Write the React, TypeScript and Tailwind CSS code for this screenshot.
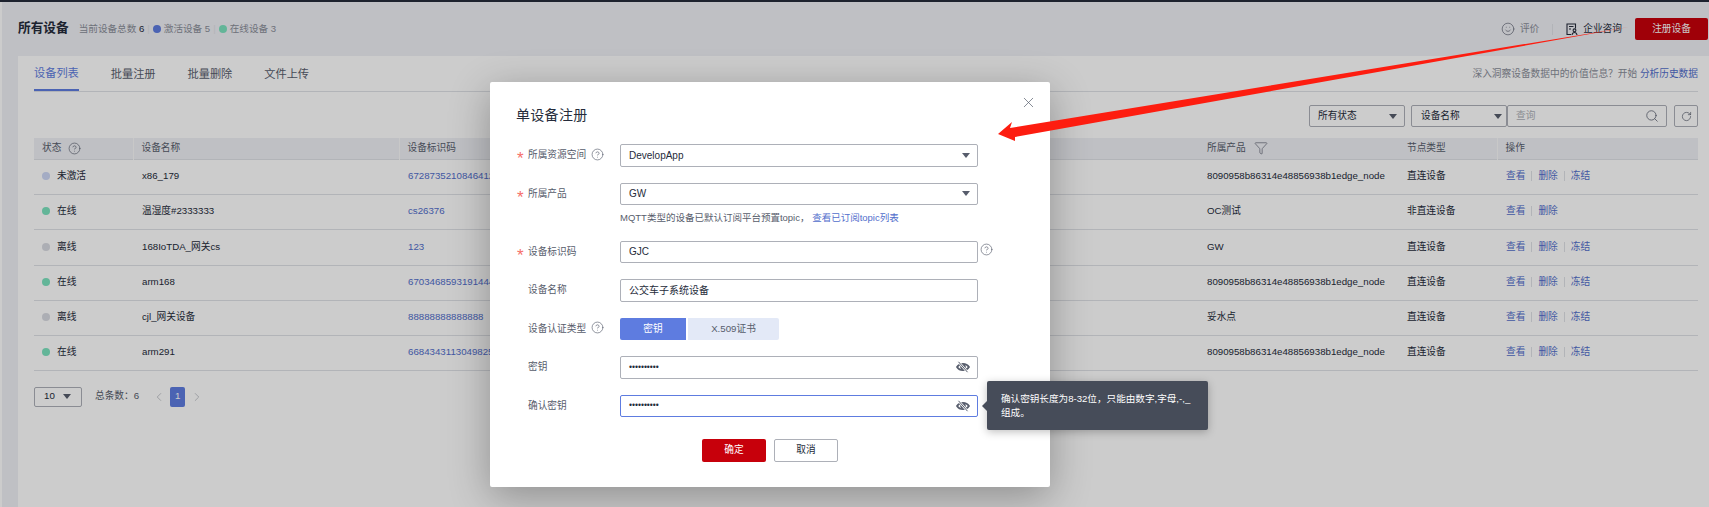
import React from 'react';
import { ChevronLeft, ChevronRight, CircleHelp, Funnel, RotateCw, Search, Smile, X } from 'lucide-react';

const rows = [
  { status: '未激活', dot: 'bg-[#cdd7f5]', name: 'x86_179', id: '672873521084641234567890', product: '8090958b86314e48856938b1edge_node', node: '直连设备', freeze: true, h: 'h-[35px]' },
  { status: '在线', dot: 'bg-[#7ce3bf]', name: '温湿度#2333333', id: 'cs26376', product: 'OC测试', node: '非直连设备', freeze: false, h: 'h-[35px]' },
  { status: '离线', dot: 'bg-[#d8dae2]', name: '168IoTDA_网关cs', id: '123', product: 'GW', node: '直连设备', freeze: true, h: 'h-[36px]' },
  { status: '在线', dot: 'bg-[#7ce3bf]', name: 'arm168', id: '670346859319144412345678', product: '8090958b86314e48856938b1edge_node', node: '直连设备', freeze: true, h: 'h-[35px]' },
  { status: '离线', dot: 'bg-[#d8dae2]', name: 'cjl_网关设备', id: '88888888888888', product: '妥水点', node: '直连设备', freeze: true, h: 'h-[35px]' },
  { status: '在线', dot: 'bg-[#7ce3bf]', name: 'arm291', id: '668434311304982512345678', product: '8090958b86314e48856938b1edge_node', node: '直连设备', freeze: true, h: 'h-[35px]' },
];

const Caret = ({ className = '' }: { className?: string }) => (
  <svg width="8" height="5" viewBox="0 0 8 5" className={className}>
    <path d="M0 0h8L4 5z" fill="#575d6c" />
  </svg>
);

const EyeSlash = () => (
  <svg width="14" height="12" viewBox="0 0 14 12" fill="none">
    <path d="M1 6C3.600 1.800 10.400 1.800 13 6C10.400 10.200 3.600 10.200 1 6Z" stroke="#575d6c" strokeWidth="1.700" />
    <circle cx="7" cy="6" r="2.800" fill="#575d6c" />
    <path d="M2.500 .8L11.500 11.200" stroke="#ffffff" strokeWidth="2.200" />
    <path d="M2.500 .8L11.500 11.200" stroke="#575d6c" strokeWidth="1" />
  </svg>
);

const ConsultIcon = () => (
  <svg width="12" height="13" viewBox="0 0 12 13" fill="none" stroke="#252b3a" strokeWidth="1.100">
    <path d="M5 11.500H1V1h8.500v4.500" />
    <path d="M3 3.500h4.500M3 6h2" />
    <circle cx="8.500" cy="7.300" r="1.400" />
    <path d="M6 12c.3-1.700 1.200-2.500 2.500-2.500S10.700 10.300 11 12" />
  </svg>
);

const Field = ({ className = '', focus = false, children }: { className?: string; focus?: boolean; children: React.ReactNode }) => (
  <div className={`flex w-[358px] items-center justify-between rounded-[2px] border bg-white pb-px pl-[8px] pr-[7px] text-[10px] text-[#252b3a] ${focus ? 'border-[#5e7ce0]' : 'border-[#adb0b8]'} ${className}`}>
    {children}
  </div>
);

const Label = ({ text, star = false, help = false }: { text: string; star?: boolean; help?: boolean }) => (
  <div className="flex w-[104px] shrink-0 items-center text-[9.700px] text-[#575d6c]">
    <span className="w-[12px] pl-px pt-[6px] text-[17px] leading-none text-[#f66f6a]">{star ? '*' : ''}</span>
    <span>{text}</span>
    {help && <CircleHelp size={13} strokeWidth={1.200} className="ml-[5px] -mt-[3px] text-[#575d6c]" />}
  </div>
);

export default function App() {
  return (
    <div className="relative h-[507px] w-[1709px] overflow-hidden bg-[#eff0f5] [font-family:'Liberation_Sans','Noto_Sans_CJK_SC',sans-serif]">
      <div className="h-[2px] bg-[#252b3a]" />
      <div className="flex h-[505px]">
        <div className="w-[2px] bg-white" />
        <div className="flex min-w-0 flex-1 flex-col pl-[16px]">
          <header className="flex h-[54px] items-center justify-between pr-px">
            <div className="flex items-center">
              <h1 className="text-[12.700px] font-bold text-[#252b3a]">所有设备</h1>
              <div className="ml-[10px] flex items-center text-[9.600px] text-[#8a8e99]">
                <span>当前设备总数 <span className="text-[#252b3a]">6</span></span>
                <span className="mx-[3px] text-[#dfe1e6]">|</span>
                <span className="mr-[3px] h-[8px] w-[8px] rounded-full bg-[#5e7ce0]" />
                <span>激活设备 5</span>
                <span className="mx-[3px] text-[#dfe1e6]">|</span>
                <span className="mr-[3px] h-[8px] w-[8px] rounded-full bg-[#7ce3bf]" />
                <span>在线设备 3</span>
              </div>
            </div>
            <div className="flex items-center text-[9.700px]">
              <Smile size={14} strokeWidth={1.100} className="text-[#575d6c]" />
              <span className="ml-[5px] text-[#8a8e99]">评价</span>
              <span className="mx-[13px] h-[11px] w-px bg-[#dfe1e6]" />
              <ConsultIcon />
              <span className="ml-[5px] text-[#252b3a]">企业咨询</span>
              <button className="ml-[13px] h-[22px] w-[73px] rounded-[2px] bg-[#c7000b] text-white">注册设备</button>
            </div>
          </header>

          <main className="flex-1 bg-white pl-[16px] pr-[11px]">
            <div className="flex h-[36px] items-center justify-between border-b border-[#dfe1e6]">
              <div className="flex h-full gap-[32px] text-[11.200px] text-[#575d6c]">
                <span className="flex items-center border-b-2 border-[#5e7ce0] pt-[2px] text-[#5e7ce0]">设备列表</span>
                <span className="flex items-center pt-[2px]">批量注册</span>
                <span className="flex items-center pt-[2px]">批量删除</span>
                <span className="flex items-center pt-[2px]">文件上传</span>
              </div>
              <div className="pt-[2px] text-[9.700px] text-[#8a8e99]">
                深入洞察设备数据中的价值信息？开始 <span className="text-[#526ecc]">分析历史数据</span>
              </div>
            </div>

            <div className="mt-[13px] flex h-[22px] justify-end text-[9.700px] text-[#252b3a]">
              <div className="flex w-[96px] items-center justify-between rounded-[2px] border border-[#adb0b8] pl-[8px] pr-[7px]">
                所有状态<Caret />
              </div>
              <div className="ml-[6px] flex w-[96px] items-center justify-between rounded-[2px] border border-[#adb0b8] pl-[9px] pr-[4px]">
                设备名称<Caret />
              </div>
              <div className="flex w-[160px] items-center justify-between rounded-[2px] border border-[#adb0b8] pl-[8px] pr-[7px] text-[#adb0b8]">
                查询<Search size={14} strokeWidth={1.300} className="text-[#575d6c]" />
              </div>
              <div className="ml-[7px] flex w-[24px] items-center justify-center rounded-[2px] border border-[#adb0b8]">
                <RotateCw size={11} strokeWidth={1.500} className="text-[#575d6c]" />
              </div>
            </div>

            <table className="mt-[11px] w-[1664px] table-fixed border-collapse text-left text-[9.700px]">
              <colgroup>
                <col className="w-[99px]" />
                <col className="w-[266px]" />
                <col className="w-[800px]" />
                <col className="w-[200px]" />
                <col className="w-[98px]" />
                <col className="w-[201px]" />
              </colgroup>
              <thead>
                <tr className="h-[21px] border-b border-[#dfe1e6] bg-[#eff0f5] text-[#575d6c]">
                  <th className="px-[8px] font-normal">
                    <span className="flex items-center gap-[7px]">状态<CircleHelp size={13} strokeWidth={1.200} /></span>
                  </th>
                  <th className="border-l border-[#fafafa] px-[8px] font-normal">设备名称</th>
                  <th className="border-l border-[#fafafa] px-[8px] font-normal">设备标识码</th>
                  <th className="px-[8px] font-normal">
                    <span className="flex items-center gap-[8px]">所属产品<Funnel size={14} strokeWidth={1.100} /></span>
                  </th>
                  <th className="px-[8px] font-normal">节点类型</th>
                  <th className="border-l border-[#fafafa] px-[8px] font-normal">操作</th>
                </tr>
              </thead>
              <tbody className="text-[#252b3a]">
                {rows.map((r) => (
                  <tr key={r.name} className={`${r.h} border-b border-[#dfe1e6]`}>
                    <td className="px-[8px]">
                      <span className="flex items-center gap-[7px]">
                        <span className={`h-[8px] w-[8px] rounded-full ${r.dot}`} />
                        {r.status}
                      </span>
                    </td>
                    <td className="px-[9px]">{r.name}</td>
                    <td className="overflow-hidden whitespace-nowrap px-[9px] text-[#526ecc]">{r.id}</td>
                    <td className="px-[8px]">{r.product}</td>
                    <td className="px-[8px]">{r.node}</td>
                    <td className="px-[9px] text-[#526ecc]">
                      <span className="flex items-center gap-[6px]">
                        <span>查看</span>
                        <span className="h-[10px] w-px bg-[#dfe1e6]" />
                        <span>删除</span>
                        {r.freeze && <span className="h-[10px] w-px bg-[#dfe1e6]" />}
                        {r.freeze && <span>冻结</span>}
                      </span>
                    </td>
                  </tr>
                ))}
              </tbody>
            </table>

            <div className="mt-[16px] flex h-[20px] items-center text-[9.700px] text-[#575d6c]">
              <div className="flex h-full w-[48px] items-center justify-between rounded-[2px] border border-[#adb0b8] pl-[9px] pr-[10px] text-[#252b3a]">
                10<Caret />
              </div>
              <span className="ml-[13px]">总条数：6</span>
              <ChevronLeft size={14} strokeWidth={1.200} className="ml-[13px] text-[#adb0b8]" />
              <span className="ml-[4px] flex h-full w-[15px] items-center justify-center rounded-[2px] bg-[#5e7ce0] text-white">1</span>
              <ChevronRight size={14} strokeWidth={1.200} className="ml-[5px] text-[#adb0b8]" />
            </div>
          </main>
        </div>
      </div>

      <div className="absolute inset-0 bg-black/20" />

      <div className="absolute left-[490px] top-[82px] h-[405px] w-[560px] rounded-[2px] bg-white pl-[26px] shadow-[0_10px_40px_rgba(0,0,0,0.3)]">
        <X size={17} strokeWidth={1} className="absolute right-[13px] top-[12px] text-[#575d6c]" />
        <h2 className="pt-[25px] text-[14px] leading-[16px] tracking-[0.300px] text-[#252b3a]">单设备注册</h2>

        <div className="mt-[21px] flex flex-col gap-[16px]">
          <div className="flex h-[23px] items-center">
            <Label text="所属资源空间" star help />
            <Field className="h-full">DevelopApp<Caret /></Field>
          </div>
          <div>
            <div className="flex h-[22px] items-center">
              <Label text="所属产品" star />
              <Field className="h-full">GW<Caret /></Field>
            </div>
            <div className="h-[20px] pl-[104px] pt-[7px] text-[9.500px] leading-[12px] text-[#575d6c]">
              MQTT类型的设备已默认订阅平台预置topic， <span className="text-[#526ecc]">查看已订阅topic列表</span>
            </div>
          </div>
          <div className="flex h-[22px] items-center">
            <Label text="设备标识码" star />
            <Field className="h-full">GJC</Field>
            <CircleHelp size={13} strokeWidth={1.200} className="ml-[2px] -mt-[5px] text-[#575d6c]" />
          </div>
          <div className="flex h-[23px] items-center">
            <Label text="设备名称" />
            <Field className="h-full">公交车子系统设备</Field>
          </div>
          <div className="flex h-[22px] items-center">
            <Label text="设备认证类型" help />
            <div className="flex h-full text-[9.700px]">
              <span className="flex w-[66px] items-center justify-center rounded-l-[2px] bg-[#5e7ce0] text-white">密钥</span>
              <span className="ml-[2px] flex w-[91px] items-center justify-center rounded-r-[2px] bg-[#e3e9f7] text-[#575d6c]">X.509证书</span>
            </div>
          </div>
          <div className="flex h-[23px] items-center">
            <Label text="密钥" />
            <Field className="h-full"><span className="text-[8.500px]">••••••••••</span><EyeSlash /></Field>
          </div>
          <div className="relative flex h-[22px] items-center">
            <Label text="确认密钥" />
            <Field className="h-full" focus><span className="text-[8.500px]">••••••••••</span><EyeSlash /></Field>
            <div className="absolute left-[471px] top-[-14px] h-[49px] w-[221px] rounded-[2px] bg-[#464c59] px-[14px] pt-[11px] text-[9.600px] leading-[14px] text-white shadow-[0_2px_8px_rgba(0,0,0,0.25)]">
              <span className="absolute left-[-5px] top-[20px] h-0 w-0 border-y-[5px] border-r-[5px] border-y-transparent border-r-[#464c59]" />
              确认密钥长度为8-32位，只能由数字,字母,-,_<br />组成。
            </div>
          </div>
        </div>

        <div className="mt-[22px] flex h-[23px] gap-[8px] pl-[186px] text-[9.700px]">
          <button className="w-[64px] rounded-[2px] bg-[#c7000b] text-white">确定</button>
          <button className="w-[64px] rounded-[2px] border border-[#adb0b8] text-[#252b3a]">取消</button>
        </div>
      </div>

      <svg className="pointer-events-none absolute left-0 top-0" width="1709" height="507" viewBox="0 0 1709 507">
        <path d="M1629 27L1015 137L1015 141L998 134L1012 122L1010 128Z" fill="#fd1d10" />
      </svg>
    </div>
  );
}
